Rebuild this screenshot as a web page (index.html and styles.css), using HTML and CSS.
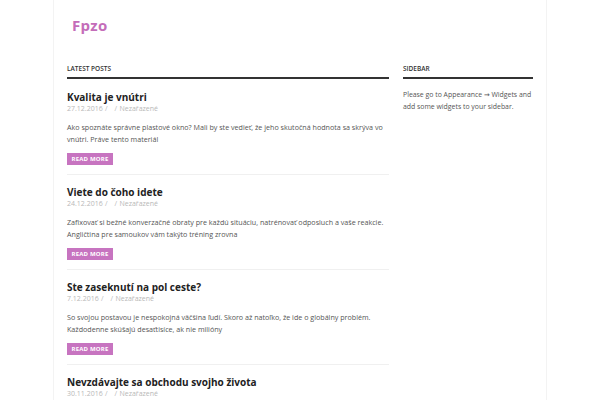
FILE: index.html
```html
<!DOCTYPE html>
<html lang="sk">
<head>
<meta charset="utf-8">
<title>Fpzo</title>
<link rel="stylesheet" href="styles.css">
</head>
<body>
<div class="page">
  <header class="site-header">
    <div class="logo">Fpzo</div>
  </header>
  <div class="content">
    <main class="main">
      <h2 class="widget-title">Latest Posts</h2>
      <article class="post">
        <h3 class="post-title">Kvalita je vnútri</h3>
        <div class="meta"><span class="date">27.12.2016</span> / &nbsp; / Nezařazené</div>
        <p class="excerpt">Ako spoznáte správne plastové okno? Mali by ste vedieť, že jeho skutočná hodnota sa skrýva vo vnútri. Práve tento materiál</p>
        <a class="btn">Read more</a>
      </article>
      <article class="post">
        <h3 class="post-title">Viete do čoho idete</h3>
        <div class="meta"><span class="date">24.12.2016</span> / &nbsp; / Nezařazené</div>
        <p class="excerpt">Zafixovať si bežné konverzačné obraty pre každú situáciu, natrénovať odposluch a vaše reakcie. Angličtina pre samoukov vám takýto tréning zrovna</p>
        <a class="btn">Read more</a>
      </article>
      <article class="post">
        <h3 class="post-title">Ste zaseknutí na pol ceste?</h3>
        <div class="meta"><span class="date">7.12.2016</span> / &nbsp; / Nezařazené</div>
        <p class="excerpt">So svojou postavou je nespokojná väčšina ľudí. Skoro až natoľko, že ide o globálny problém. Každodenne skúšajú desaťtisíce, ak nie milióny</p>
        <a class="btn">Read more</a>
      </article>
      <article class="post">
        <h3 class="post-title">Nevzdávajte sa obchodu svojho života</h3>
        <div class="meta"><span class="date">30.11.2016</span> / &nbsp; / Nezařazené</div>
      </article>
    </main>
    <aside class="sidebar">
      <h2 class="widget-title">Sidebar</h2>
      <p class="side-text">Please go to Appearance → Widgets and add some widgets to your sidebar.</p>
    </aside>
  </div>
</div>
</body>
</html>
```
FILE: styles.css
```css
html, body {
  margin: 0;
  padding: 0;
  background: #fff;
}
body {
  font-family: "Open Sans", "DejaVu Sans", sans-serif;
  color: #555;
  overflow: hidden;
}
.page {
  width: 492px;
  margin: 0 auto;
  min-height: 400px;
  border-left: 1px solid #f3f3f3;
  border-right: 1px solid #f3f3f3;
}
.site-header {
  padding: 15px 18px 0;
  height: 45px;
  box-sizing: border-box;
}
.logo {
  font-size: 15px;
  font-weight: 700;
  line-height: 20px;
  color: #c46db9;
  letter-spacing: 0.3px;
}
.content {
  display: flex;
  gap: 14px;
  padding: 0 13px;
}
.main {
  width: 322px;
}
.sidebar {
  width: 130px;
}
.widget-title {
  margin: 0;
  font-size: 6.5px;
  font-weight: 600;
  text-transform: uppercase;
  color: #333;
  line-height: 10px;
  padding: 19px 0 3px;
  border-bottom: 2px solid #333;
}
.post {
  padding: 10px 0 9px;
  border-bottom: 1px solid #f0f0f0;
}
.main .widget-title + .post {
  padding-top: 11px;
}
.post-title {
  margin: 0;
  font-size: 10px;
  font-weight: 700;
  line-height: 14px;
  color: #222;
}
.meta {
  font-size: 7px;
  line-height: 10px;
  color: #b8b8b8;
  word-spacing: 0.5px;
}
.excerpt {
  margin: 7px 0 0;
  font-size: 7.15px;
  line-height: 12px;
  color: #555;
}
.btn {
  display: block;
  width: fit-content;
  margin-top: 8px;
  height: 12px;
  line-height: 12px;
  padding: 0 4.5px;
  background: #c774c0;
  color: #fff;
  font-size: 6px;
  font-weight: 700;
  text-transform: uppercase;
  letter-spacing: 0.2px;
}
.side-text {
  margin: 10px 0 0;
  font-size: 6.9px;
  line-height: 12px;
  color: #555;
}
```
